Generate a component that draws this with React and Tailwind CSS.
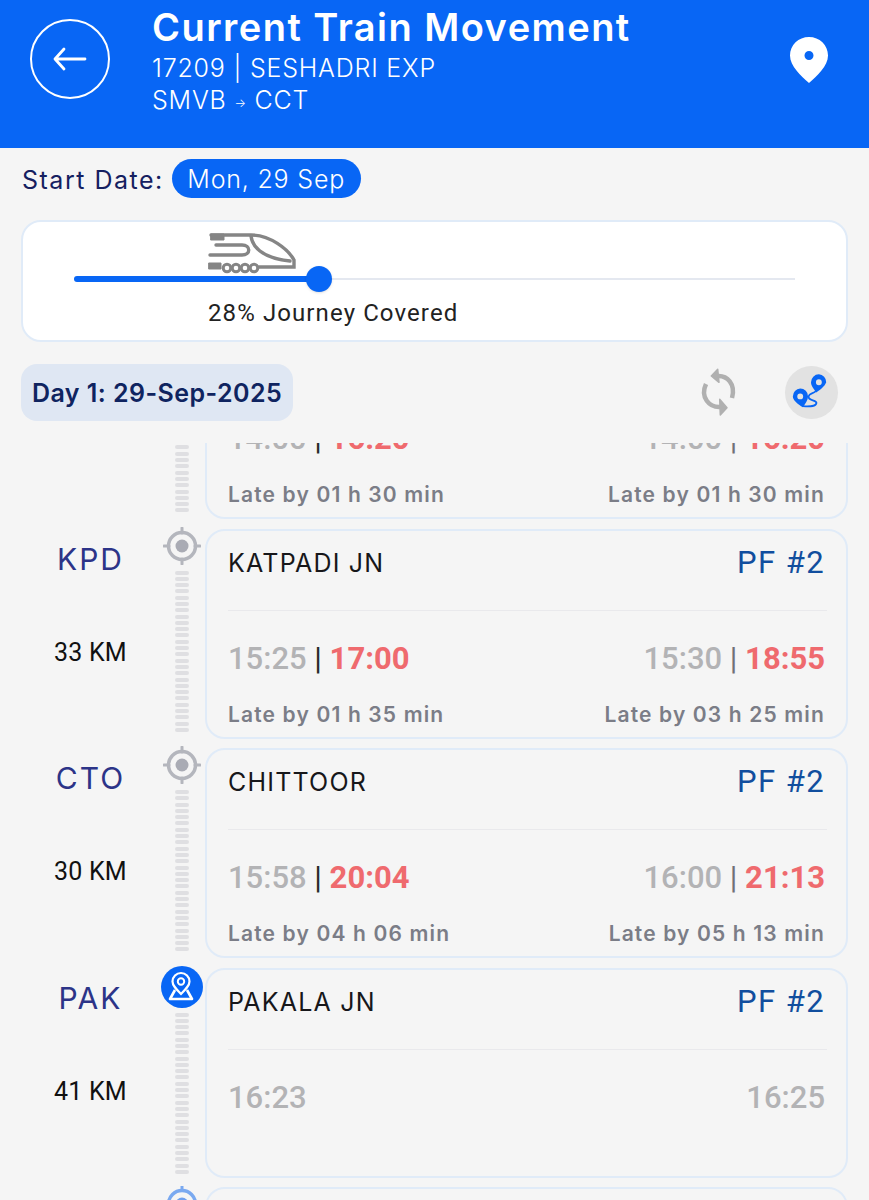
import React from "react";

const heading = { fontFamily: "Inter, sans-serif" };
const roboto = { fontFamily: "Roboto, sans-serif" };

const stops = [
  {
    code: "KPD",
    name: "KATPADI JN",
    km: "33 KM",
    arr: ["15:25", "17:00"],
    dep: ["15:30", "18:55"],
    late: ["Late by 01 h 35 min", "Late by 03 h 25 min"],
  },
  {
    code: "CTO",
    name: "CHITTOOR",
    km: "30 KM",
    arr: ["15:58", "20:04"],
    dep: ["16:00", "21:13"],
    late: ["Late by 04 h 06 min", "Late by 05 h 13 min"],
  },
  {
    code: "PAK",
    name: "PAKALA JN",
    km: "41 KM",
    arr: ["16:23"],
    dep: ["16:25"],
    current: true,
  },
];

const TargetIcon = () => (
  <svg width="38" height="38" viewBox="0 0 38 38">
    <circle cx="19" cy="19" r="13.5" fill="none" stroke="#b4b6bd" strokeWidth="3.5" />
    <circle cx="19" cy="19" r="6.5" fill="#a9abb4" />
    <path d="M19 1v5M19 32v5M1 19h5M32 19h5" stroke="#b4b6bd" strokeWidth="3" strokeLinecap="round" />
  </svg>
);

const CurrentIcon = () => (
  <svg width="42" height="42" viewBox="0 0 42 42" fill="none" className="mt-[4px]">
    <circle cx="21" cy="21" r="21" fill="#0866f5" />
    <path d="M20 28C15 23 11.5 19.500 11.500 15.500a8.500 8.500 0 0 1 17 0C28.500 19.500 25 23 20 28z" stroke="white" strokeWidth="2.200" />
    <circle cx="20" cy="15.500" r="3.200" stroke="white" strokeWidth="2" />
    <path d="M14 24L9 33H31L26 24" stroke="white" strokeWidth="2.600" strokeLinejoin="round" />
  </svg>
);

// dotted track drawn between the stop markers
const Track = ({ height }) => (
  <div className="flex flex-col items-center gap-[2.3px] overflow-hidden" style={{ height }}>
    {Array.from({ length: Math.ceil(height / 6.3) }).map((_, i) => (
      <div key={i} className="w-[14px] h-[4px] shrink-0 rounded-full bg-[#dfdfe2]" />
    ))}
  </div>
);

const TimePair = ({ times, pipe }) => (
  <div className="text-[31px] leading-[34px] font-medium" style={roboto}>
    <span className="text-[#b3b3b5]">{times[0]}</span>
    {times[1] && (
      <>
        <span className={`font-normal ${pipe}`}> | </span>
        <span className="text-[#ef6a6e] font-bold">{times[1]}</span>
      </>
    )}
  </div>
);

const StopCard = ({ name, arr, dep, late }) => (
  <div className="h-[210px] border-2 border-[#e0ebf8] rounded-[20px] pl-[21px] pr-[21px] flex flex-col">
    <div className="h-[79px] flex items-start justify-between pt-[15px]">
      <span className="text-[25px] leading-[34px] tracking-[1.2px] text-[#17171a]" style={heading}>{name}</span>
      {name && <span className="text-[31px] leading-[34px] tracking-[1.4px] text-[#114e9e]" style={roboto}>PF #2</span>}
    </div>
    <div className="h-px bg-[#e9e9ec] mr-[-2px]" />
    <div className="flex justify-between pt-[31px]">
      <TimePair times={arr} pipe="text-[#2a2a2a]" />
      <TimePair times={dep} pipe="text-[#6f7078]" />
    </div>
    {late && (
      <div className="flex justify-between pt-[26px] text-[21px] leading-[26px] tracking-[1.15px] font-semibold text-[#7b7d87]" style={heading}>
        <span>{late[0]}</span>
        <span>{late[1]}</span>
      </div>
    )}
  </div>
);

const StopRow = ({ stop }) => (
  <div className="flex h-[219.5px]">
    <div className="w-[159px] shrink-0 flex flex-col items-center pl-[22px]">
      <span className="mt-[13px] text-[30px] leading-[34px] tracking-[2px] text-[#2c3488]" style={heading}>{stop.code}</span>
      <span className="mt-[63px] text-[25px] leading-[28px] tracking-[0.2px] text-[#111]" style={roboto}>{stop.km}</span>
    </div>
    <div className="w-[46px] shrink-0 flex flex-col items-center">
      <div className="h-[38px] flex items-center justify-center mt-[-2px]">
        {stop.current ? <CurrentIcon /> : <TargetIcon />}
      </div>
      <div className={stop.current ? "mt-[9px]" : "mt-[6px]"}>
        <Track height={162} />
      </div>
    </div>
    <div className="flex-1 pr-[21px]"><StopCard {...stop} /></div>
  </div>
);

export default function App() {
  return (
    <div className="w-[869px] h-[1200px] bg-[#f5f5f5] overflow-hidden flex flex-col" style={heading}>
      <header className="h-[148px] bg-[#0866f5] flex items-start shrink-0 text-white">
        <button className="mt-[19px] ml-[30px] w-[80px] h-[80px] rounded-full border-2 border-white flex items-center justify-center">
          <svg width="34" height="24" viewBox="0 0 34 24" fill="none" stroke="white" strokeWidth="2.800" strokeLinecap="round" strokeLinejoin="round">
            <path d="M32 12H2M11 2L2 12l9 10" />
          </svg>
        </button>
        <div className="ml-[42px] mt-[5px]">
          <h1 className="text-[38px] leading-[44px] font-semibold tracking-[1.45px]">Current Train Movement</h1>
          <p className="text-[25px] leading-[32px] font-light tracking-[0.8px] mt-[3px]">17209 | SESHADRI EXP</p>
          <p className="text-[25px] leading-[32px] font-light tracking-[0.8px]">
            SMVB <span className="text-[12px] align-[2px]">→</span> CCT
          </p>
        </div>
        <svg className="ml-auto mt-[37px] mr-[41px]" width="38" height="46" viewBox="0 0 38 46">
          <path fillRule="evenodd" fill="white" d="M19 0C8.5 0 0 8 0 18.500 0 29 11 39 19 46c8-7 19-17 19-27.500C38 8 29.500 0 19 0zm0 14a4.500 4.500 0 1 1 0 9 4.500 4.500 0 0 1 0-9z" />
        </svg>
      </header>

      <div className="flex items-center h-[62px] pl-[22px] pt-[2px] shrink-0">
        <span className="mt-[2px] text-[25px] tracking-[1.5px] text-[#152060]">Start Date:</span>
        <span className="ml-[8px] mb-[4px] pt-[4px] h-[39px] w-[189px] rounded-[20px] bg-[#0866f5] text-white text-[25px] tracking-[0.8px] font-light flex items-center justify-center">Mon, 29 Sep</span>
      </div>

      <div className="mx-[21px] mt-[10px] h-[122px] shrink-0 bg-white border-2 border-[#e0ebf8] rounded-[20px] px-[51px] flex flex-col">
        <div className="relative h-[74px]">
          <svg className="absolute left-[134px] top-[10px]" width="90" height="44" viewBox="0 0 90 44" fill="none" stroke="#858585" strokeWidth="3.400" strokeLinecap="round">
            <path d="M3 3H43C62 3 80 17 86 28V35H51" />
            <path d="M43 4C44 13 52 26 82 29" />
            <path d="M8 13H34C43 13 43 23 34 23H2" />
            <path d="M3 2h13v6H3z" fill="#858585" strokeWidth="1" />
            <path d="M1 31h12v6H1z" fill="#858585" strokeWidth="1" />
            <circle cx="19" cy="36" r="3.800" strokeWidth="3" />
            <circle cx="28" cy="36" r="3.800" strokeWidth="3" />
            <circle cx="37" cy="36" r="3.800" strokeWidth="3" />
            <circle cx="46" cy="36" r="3.800" strokeWidth="3" />
          </svg>
          <div className="absolute left-0 right-0 top-[56px] h-[2px] bg-[#e4e8f0]" />
          <div className="absolute left-0 top-[54px] h-[6px] w-[240px] rounded-full bg-[#0866f5]" />
          <div className="absolute left-[232px] top-[44px] w-[26px] h-[26px] rounded-full bg-[#0866f5] shadow-sm" />
        </div>
        <div className="pl-[134px] text-[24px] leading-[28px] tracking-[1.1px] mt-[3px] text-[#222]" style={roboto}>28% Journey Covered</div>
      </div>

      <div className="flex items-center h-[58px] mt-[21px] pl-[21px] shrink-0">
        <div className="h-[57px] w-[272px] rounded-[16px] bg-[#dfe7f3] pt-[3px] flex items-center justify-center text-[25px] tracking-[0.45px] font-semibold text-[#0f2460]">Day 1: 29-Sep-2025</div>
        <svg className="ml-auto" width="50" height="54" viewBox="0 0 50 54" fill="none" stroke="#b0b0b0" strokeWidth="4.500">
          <path d="M20 11C30 10 39 19 35 33" />
          <path d="M24 42C12 43 3 32 9 19" />
          <path d="M14.300 11L20.700 4.300L22 17.300z" fill="#b0b0b0" strokeWidth="1.500" strokeLinejoin="round" />
          <path d="M30 42.700L22.700 34.300L23.300 50z" fill="#b0b0b0" strokeWidth="1.500" strokeLinejoin="round" />
        </svg>
        <div className="ml-[38px] mr-[31px] w-[53px] h-[53px] rounded-full bg-[#e2e2e2] flex items-center justify-center">
          <svg width="53" height="53" viewBox="0 0 54 54" fill="none">
            <path fillRule="evenodd" fill="#0866f5" d="M34.500 8.500a8 8 0 0 0-8 8c0 4 3 7 5.500 10.500 3-2.500 8.500-6 10-10.500a8 8 0 0 0-7.500-8zm0 5a3 3 0 1 1 0 6 3 3 0 0 1 0-6z" />
            <path fillRule="evenodd" fill="#0866f5" d="M15.500 23a8 8 0 0 0-7.500 8c0 4 5 7.500 10 11 2.500-3.500 5.500-7 5.500-11a8 8 0 0 0-8-8zm0 5a3 3 0 1 1 0 6 3 3 0 0 1 0-6z" />
            <path d="M32 25C29 29 25 27 24 31C23 36 33 34 32 38C31 42 24 41 18 41" stroke="#0866f5" strokeWidth="1.800" />
          </svg>
        </div>
      </div>

      <div className="mt-[22px] flex-1 overflow-hidden">
        <div className="mt-[-134px]">
          <StopRow
            stop={{
              code: "",
              name: "",
              km: "",
              arr: ["14:00", "16:20"],
              dep: ["14:00", "16:20"],
              late: ["Late by 01 h 30 min", "Late by 01 h 30 min"],
            }}
          />
          {stops.map((s) => (
            <StopRow key={s.code} stop={s} />
          ))}
          <div className="flex">
            <div className="w-[159px] shrink-0" />
            <div className="w-[46px] shrink-0 flex justify-center">
              <svg width="38" height="38" viewBox="0 0 38 38" className="mt-[-2px]">
                <circle cx="19" cy="19" r="13.500" fill="none" stroke="#7aa9f0" strokeWidth="3.500" />
                <circle cx="19" cy="19" r="6.500" fill="#6fa0ee" />
                <path d="M19 1v5" stroke="#7aa9f0" strokeWidth="3" />
              </svg>
            </div>
            <div className="flex-1 mr-[21px] h-[210px] border-2 border-[#e0ebf8] rounded-[20px]" />
          </div>
        </div>
      </div>
    </div>
  );
}
